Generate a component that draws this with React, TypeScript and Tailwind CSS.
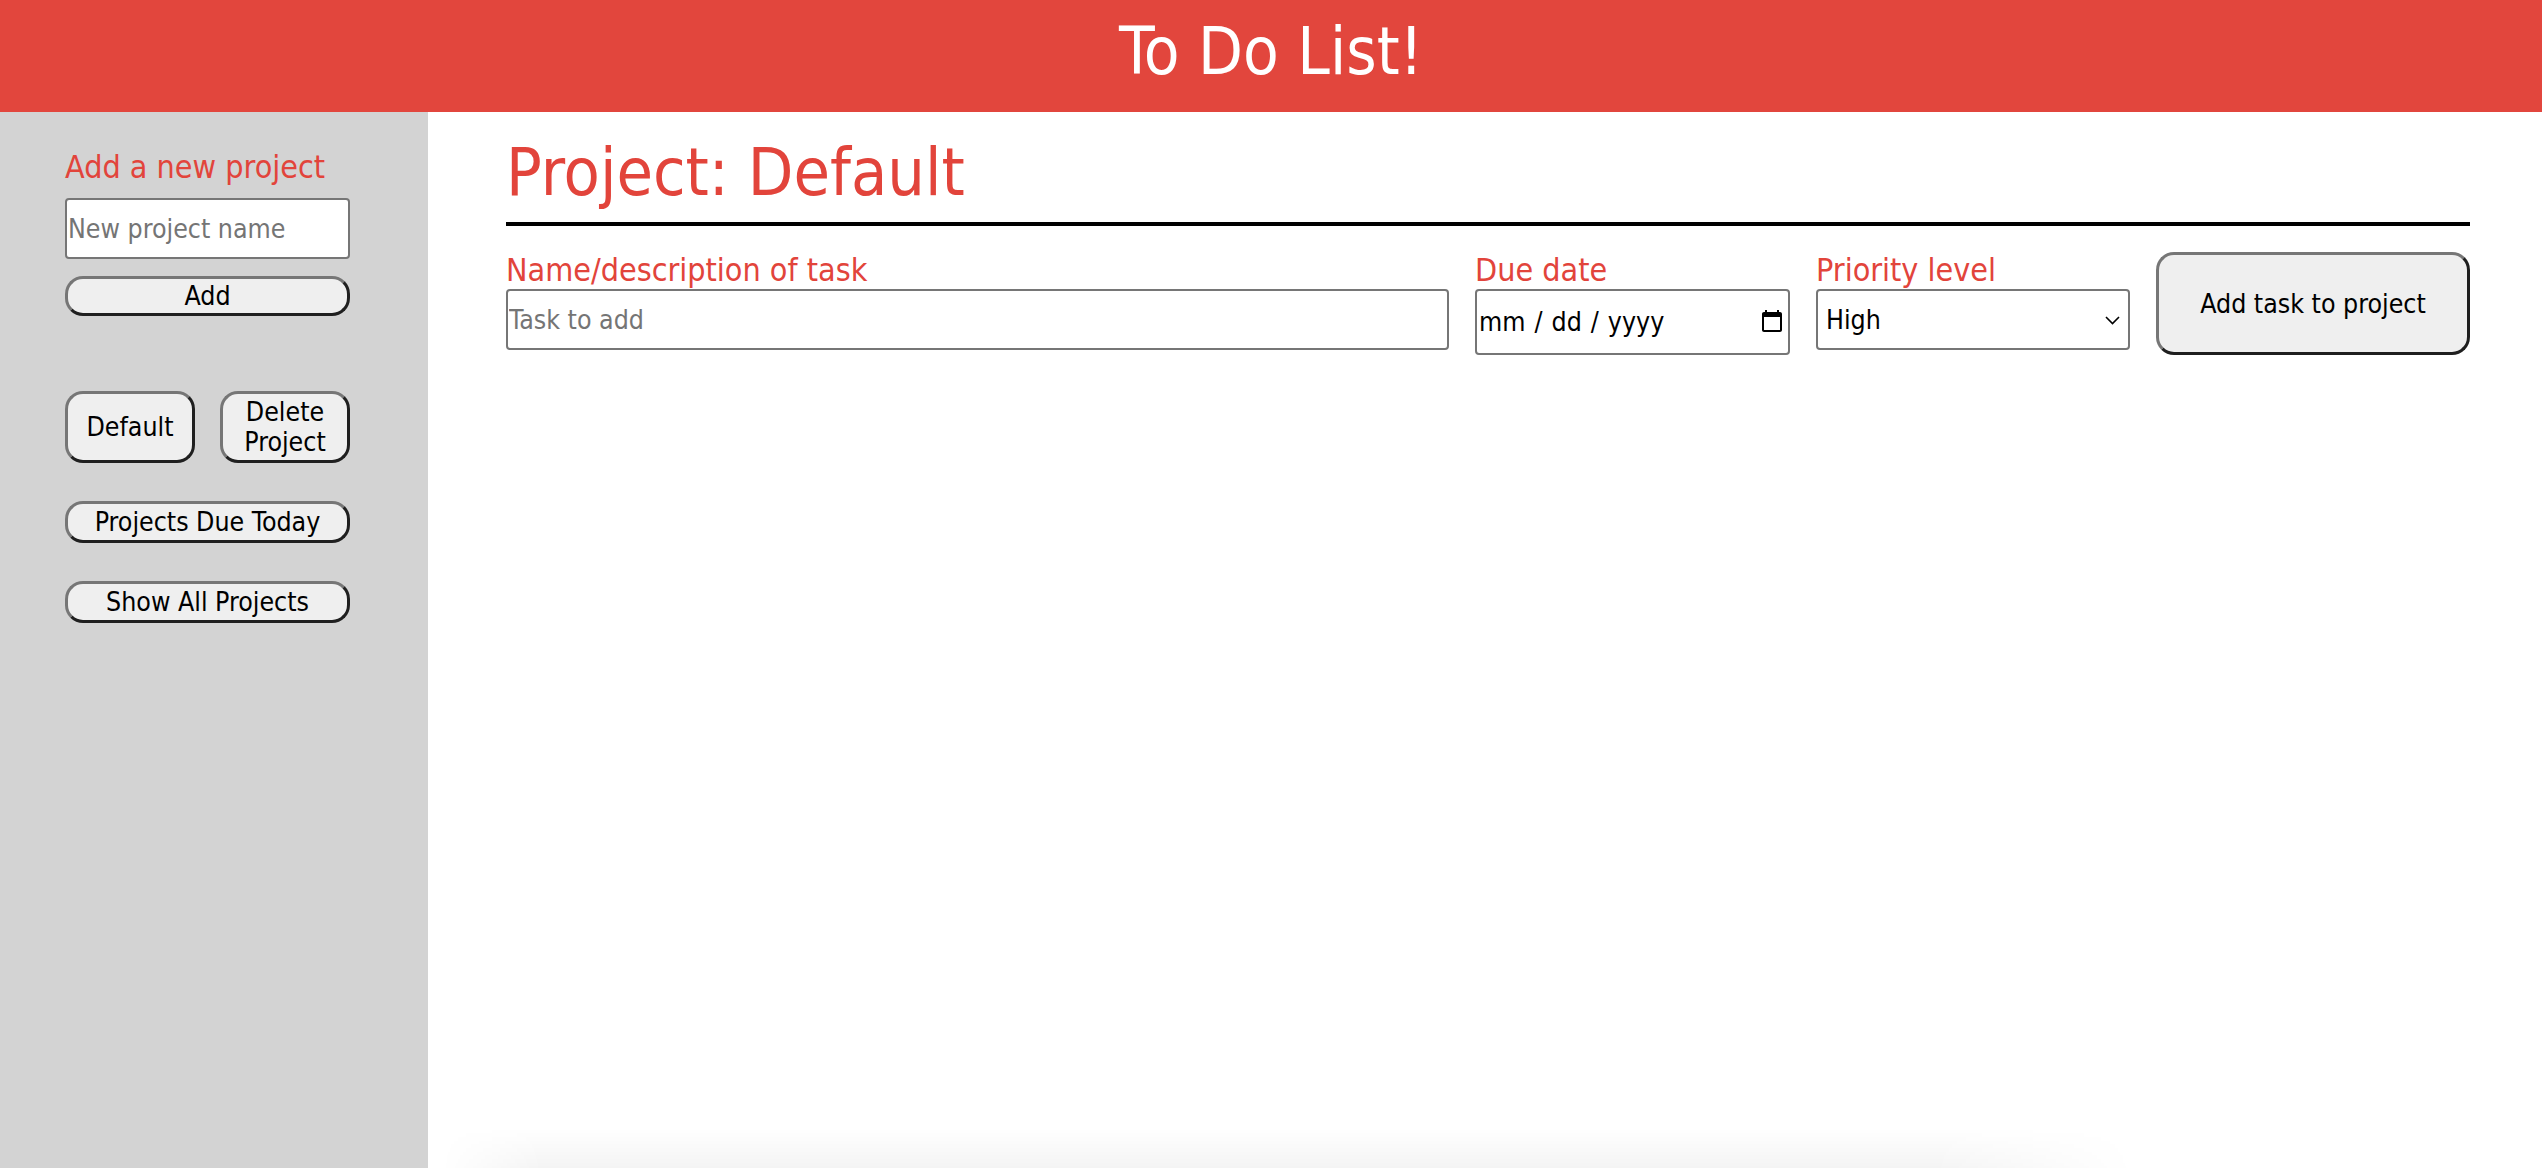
import React from "react";

const btn =
  "bg-[#efefef] text-black text-[26.5px] leading-[30px] border-[3px] border-t-[#767676] border-l-[#767676] border-b-[#1f1f1f] border-r-[#1f1f1f] rounded-[18px] text-center";

const field =
  "bg-white border-2 border-[#767676] rounded-[4px] text-[26.5px] text-black outline-none";

function Sidebar() {
  return (
    <aside className="w-[428px] shrink-0 bg-[#d3d3d3] pl-[65px] pt-[37px] flex flex-col">
      <div className="w-[285px] flex flex-col">
        <div className="text-[32px] leading-[37px] text-[#e2443b] whitespace-nowrap">Add a new project</div>
        <input
          type="text"
          placeholder="New project name"
          className={`${field} mt-[12px] h-[61px] w-full px-[1px] placeholder:text-[#757575]`}
        />
        <button type="button" className={`${btn} mt-[17px] h-[40px] py-0`}>
          Add
        </button>

        <div className="mt-[75px] flex justify-between">
          <button type="button" className={`${btn} w-[130px] h-[72px] py-[3px]`}>
            Default
          </button>
          <button type="button" className={`${btn} w-[130px] h-[72px] py-[3px]`}>
            Delete Project
          </button>
        </div>

        <button type="button" className={`${btn} mt-[38px] h-[42px] py-[3px] whitespace-nowrap`}>
          Projects Due Today
        </button>
        <button type="button" className={`${btn} mt-[38px] h-[42px] py-[3px] whitespace-nowrap`}>
          Show All Projects
        </button>
      </div>
    </aside>
  );
}

function Field({ label, className, children }: { label: string; className?: string; children: React.ReactNode }) {
  return (
    <div className={`flex flex-col ${className ?? ""}`}>
      <label className="text-[32px] leading-[37px] text-[#e2443b] whitespace-nowrap">{label}</label>
      {children}
    </div>
  );
}

export default function App() {
  return (
    <div className="h-screen overflow-hidden flex flex-col bg-white font-['DejaVu_Sans_Condensed','DejaVu_Sans',sans-serif] [font-stretch:condensed]">
      <header className="h-[112px] shrink-0 bg-[#e2463d] flex items-center justify-center pb-[10px]">
        <h1 className="text-white text-[65px] leading-none">To Do List!</h1>
      </header>

      <div className="flex flex-1 min-h-0">
        <Sidebar />

        <main className="flex-1 flex flex-col pl-[78px] pr-[72px]">
          <h2 className="mt-[22px] text-[66px] leading-[78px] text-[#e2443b]">Project: Default</h2>
          <div className="mt-[10px] h-[4px] bg-black" />

          <div className="mt-[26px] flex items-start gap-[26px]">
            <Field label="Name/description of task" className="flex-1">
              <input
                type="text"
                placeholder="Task to add"
                className={`${field} h-[61px] w-full px-[1px] placeholder:text-[#757575]`}
              />
            </Field>
            <Field label="Due date" className="w-[315px]">
              <input
                type="date"
                className={`${field} h-[66px] w-full px-[1px] [&::-webkit-datetime-edit-text]:px-[8px]`}
              />
            </Field>
            <Field label="Priority level" className="w-[314px]">
              <div className="relative">
                <select
                  defaultValue="High"
                  className={`${field} h-[61px] w-full appearance-none pl-[8px] pr-[30px]`}
                >
                  <option>High</option>
                  <option>Medium</option>
                  <option>Low</option>
                </select>
                <svg
                  className="pointer-events-none absolute right-[10px] top-[27px] h-[9px] w-[15px]"
                  viewBox="0 0 15 9"
                  fill="none"
                  aria-hidden="true"
                >
                  <path d="M1 1l6.5 6.5L14 1" stroke="black" strokeWidth="1.6" />
                </svg>
              </div>
            </Field>
            <button type="button" className={`${btn} w-[314px] h-[103px] shrink-0`}>
              Add task to project
            </button>
          </div>

          <div className="mt-auto -ml-[65px] mr-[335px] h-[40px] bg-[linear-gradient(to_bottom,rgba(0,0,0,0),rgba(0,0,0,0.045))] [mask-image:linear-gradient(to_right,transparent,black_6%,black_88%,transparent)]" />
        </main>
      </div>
    </div>
  );
}
